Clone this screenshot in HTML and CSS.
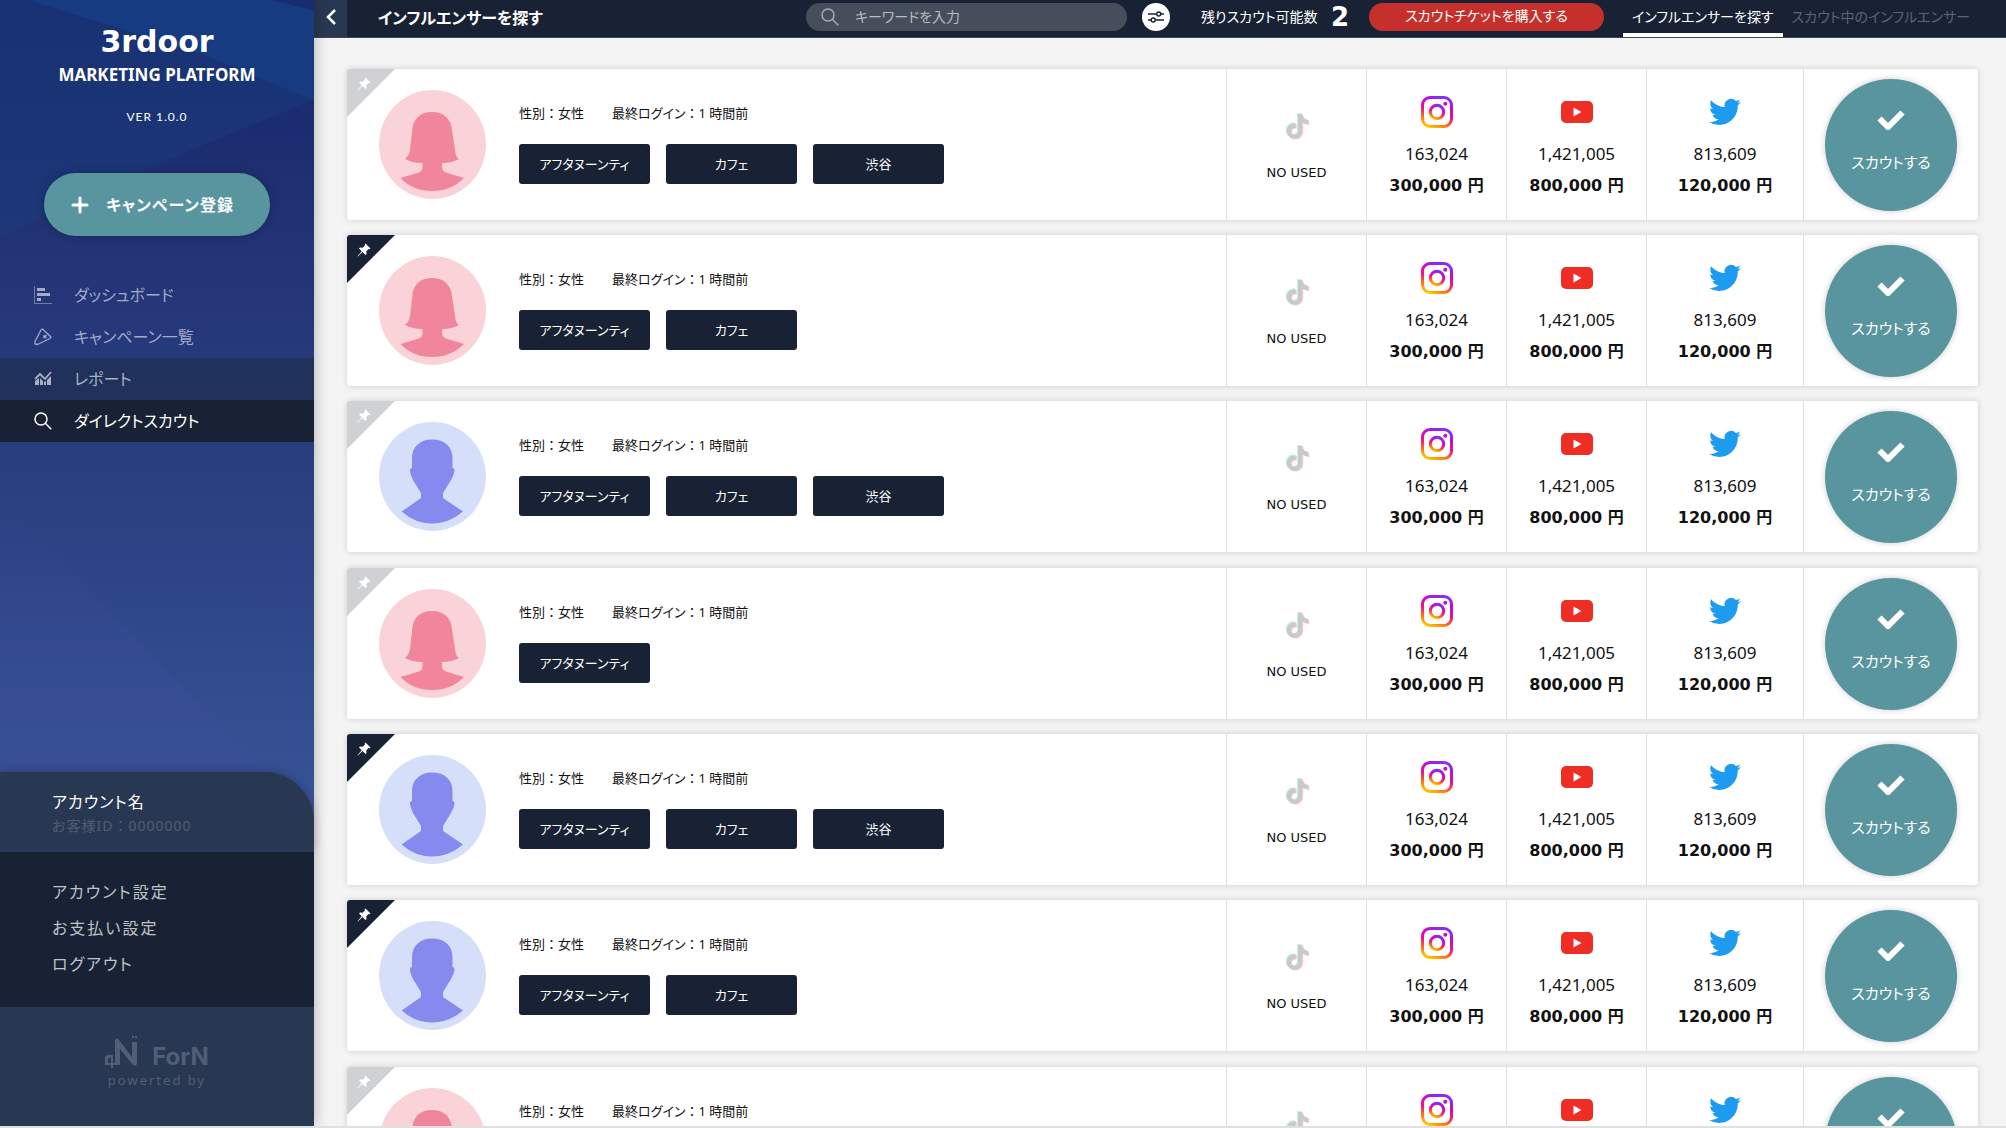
FILE: index.html
```html
<!DOCTYPE html>
<html lang="ja">
<head>
<meta charset="utf-8">
<meta name="viewport" content="width=device-width, initial-scale=1">
<title>3rdoor MARKETING PLATFORM</title>
<link rel="stylesheet" href="styles.css">
</head>
<body>
<svg class="sprite" aria-hidden="true">
  <defs>
    <linearGradient id="ig" x1="0.2" y1="1" x2="0.6" y2="0">
      <stop offset="0" stop-color="#ffc400"/><stop offset="0.25" stop-color="#ff6a1a"/><stop offset="0.5" stop-color="#f0128a"/><stop offset="0.8" stop-color="#c508d8"/><stop offset="1" stop-color="#8a2cf5"/>
    </linearGradient>
    <symbol id="i-instagram" viewBox="0 0 32 32"><g fill="none" stroke="url(#ig)" stroke-width="3"><rect x="1.500" y="1.500" width="29" height="29" rx="7.500"/><circle cx="16" cy="16" r="6.700"/></g><circle cx="24.300" cy="7.800" r="2" fill="#c010d0"/></symbol>
    <symbol id="i-youtube" viewBox="0 0 32 22"><rect width="32" height="22" rx="5" fill="#ee2d24"/><path d="M12.500 6.500v9l8-4.500z" fill="#fff"/></symbol>
    <symbol id="i-twitter" viewBox="0 0 24 24"><path fill="#1d9bf0" d="M23.953 4.570a10 10 0 01-2.825.775 4.958 4.958 0 002.163-2.723c-.951.555-2.005.959-3.127 1.184a4.920 4.920 0 00-8.384 4.482C7.690 8.095 4.067 6.130 1.640 3.162a4.822 4.822 0 00-.666 2.475c0 1.710.870 3.213 2.188 4.096a4.904 4.904 0 01-2.228-.616v.060a4.923 4.923 0 003.946 4.827 4.996 4.996 0 01-2.212.085 4.936 4.936 0 004.604 3.417 9.867 9.867 0 01-6.102 2.105c-.390 0-.779-.023-1.170-.067a13.995 13.995 0 007.557 2.209c9.053 0 13.998-7.496 13.998-13.985 0-.210 0-.420-.015-.630A9.935 9.935 0 0024 4.590z"/></symbol>
    <path id="note" d="M12.525.02c1.31-.02 2.61-.01 3.91-.02.08 1.53.63 3.09 1.75 4.17 1.12 1.11 2.7 1.62 4.24 1.79v4.03c-1.44-.05-2.89-.35-4.2-.97-.57-.26-1.1-.59-1.62-.93-.01 2.92.01 5.84-.02 8.75-.08 1.4-.54 2.79-1.35 3.94-1.31 1.92-3.58 3.17-5.91 3.21-1.43.08-2.86-.31-4.08-1.03-2.02-1.19-3.44-3.37-3.65-5.71-.02-.5-.03-1-.01-1.49.18-1.9 1.12-3.72 2.58-4.96 1.66-1.44 3.98-2.13 6.15-1.72.02 1.48-.04 2.96-.04 4.44-.99-.32-2.15-.23-3.02.37-.63.41-1.11 1.04-1.36 1.75-.21.51-.15 1.07-.14 1.61.24 1.64 1.82 3.02 3.5 2.87 1.12-.01 2.19-.66 2.77-1.61.19-.33.4-.67.41-1.06.1-1.79.06-3.57.07-5.36.01-4.03-.01-8.05.02-12.07z"/>
    <symbol id="i-tiktok" viewBox="0 -1 25 27"><use href="#note" x="0" y="0" fill="#c3f1f0"/><use href="#note" x="2" y="1.500" fill="#fcccd6"/><use href="#note" x="1" y="0.800" fill="#c9c9c9"/></symbol>
    <symbol id="i-pin" viewBox="0 0 14 14"><path fill="#fff" d="M8.500.5 13.500 5.500 12.500 6.300 11.500 6 9.300 8.300 9.500 11 8.500 12 5.500 9 .8 13.500.5 13.200 4.700 8.200 2 5.500 3 4.500 5.700 4.700 8 2.500 7.700 1.300z"/></symbol>
    <symbol id="i-check" viewBox="0 0 28 20"><path d="M2.500 8.500 11 17 25.500 2.500" fill="none" stroke="#fff" stroke-width="6"/></symbol>
    <symbol id="i-search" viewBox="0 0 18 18"><g fill="none" stroke="currentColor" stroke-width="1.500"><circle cx="7" cy="7" r="6"/><path d="M11.300 11.300 17.300 17.300"/></g></symbol>
    <symbol id="a-female" viewBox="0 0 107 109"><ellipse cx="53.500" cy="54.500" rx="53.500" ry="54.500" fill="#f9d3d8"/><path fill="#f0859b" d="M53 22C41 22 34 29 33.300 40L31 60Q30 66 26 69Q33 73 43.500 73V77Q43.500 81 40 82.500L21.500 88Q34 101 53 101T85 88L67 82.500Q63 81 63 77V73Q73 73 80 69Q76.500 67 76 60L73 40C72 29 65 22 53 22z"/></symbol>
    <symbol id="a-male" viewBox="0 0 107 109"><ellipse cx="53.500" cy="54.500" rx="53.500" ry="54.500" fill="#d5dff9"/><path fill="#8689ee" d="M53 17.500C41 17.500 33 25 33 36V46Q31 46 31 49Q31.500 53 34 58L42 71V76L22.700 89.500Q36 101.500 53 101.500T84 89.500L64 76V71L72 58Q75 53 75.500 49Q75.500 46 73.500 46V36C73.500 25 66 17.500 53 17.500z"/></symbol>
  </defs>
</svg>

<div class="app">
  <aside class="sidebar">
    <svg class="sidebar-art" viewBox="0 0 314 772" preserveAspectRatio="none" aria-hidden="true">
      <defs>
        <linearGradient id="sky" x1="0" y1="0" x2="0" y2="1"><stop offset="0" stop-color="#19306f"/><stop offset="0.15" stop-color="#1c2c70"/><stop offset="0.32" stop-color="#243577"/><stop offset="0.6" stop-color="#2a4182"/><stop offset="1" stop-color="#3a5699"/></linearGradient>
        <linearGradient id="ray" x1="0" y1="0" x2="0" y2="1"><stop offset="0" stop-color="#183173"/><stop offset="1" stop-color="#1d3778"/></linearGradient>
        <linearGradient id="haze" x1="0" y1="0" x2="0" y2="1"><stop offset="0" stop-color="#3b4da0" stop-opacity="0"/><stop offset="1" stop-color="#3b4f9a" stop-opacity="0.600"/></linearGradient>
      </defs>
      <rect width="314" height="772" fill="url(#sky)"/>
      <path d="M0 0H314V90L100 170 0 215z" fill="url(#ray)"/>
      <path d="M28 0H272L314 9V91L205 50z" fill="#173b80"/>
      <path d="M272 0H314V9z" fill="#1a2b70"/>
      <path d="M0 450 314 745V772H0z" fill="url(#haze)"/>
    </svg>
    <div class="brand">
      <h1 class="brand-name">3rdoor</h1>
      <p class="brand-sub">MARKETING PLATFORM</p>
      <p class="brand-ver">VER 1.0.0</p>
    </div>
    <button class="campaign-btn" type="button">
      <svg width="18" height="18" viewBox="0 0 18 18" aria-hidden="true"><path d="M9 2V16M2 9H16" stroke="#fff" stroke-width="3" stroke-linecap="round"/></svg>
      <span>キャンペーン登録</span>
    </button>
    <nav class="menu">
      <a href="#"><svg width="18" height="18" viewBox="0 0 18 18" aria-hidden="true"><path d="M.500 0V17.500H18" fill="none" stroke="currentColor" opacity=".6"/><path d="M3 2h8v3H3zM3 7h13v3H3zM3 12h4v3H3z" fill="currentColor"/></svg>ダッシュボード</a>
      <a href="#"><svg width="18" height="18" viewBox="0 0 18 18" aria-hidden="true"><g fill="none" stroke="currentColor" stroke-width="1.300" stroke-linejoin="round"><path d="M8.500 1 17 9 16 10.500 3.500 16.500 1 16 1 13.500 7 2z"/><path d="M10 9.500 12.500 7 M10 7V9.500H12.500"/></g></svg>キャンペーン一覧</a>
      <a href="#" class="hover"><svg width="18" height="18" viewBox="0 0 18 18" aria-hidden="true"><path d="M1 9 6 4 11 9 17 2" fill="none" stroke="currentColor" stroke-width="1.800"/><path d="M1 11 5 8V15H1zM6 8 9 11V15H6zM10 12 12 11V15H10zM13 10 17 6V15H13z" fill="currentColor"/></svg>レポート</a>
      <a href="#" class="active" aria-current="page"><svg width="18" height="18" aria-hidden="true"><use href="#i-search"/></svg>ダイレクトスカウト</a>
    </nav>
    <section class="account">
      <p class="account-name">アカウント名</p>
      <p class="account-id">お客様ID<span class="colon">：</span>0000000</p>
    </section>
    <nav class="account-menu">
      <a href="#">アカウント設定</a>
      <a href="#">お支払い設定</a>
      <a href="#">ログアウト</a>
    </nav>
    <footer class="powered">
      <div class="logo">
        <svg width="33" height="33" viewBox="0 0 33 33" aria-hidden="true"><path fill="currentColor" d="M10 4Q12 1 14 4L27 21V6H32V28Q31 31 28 29L15 13V29H8V32H6V29H0V22Q1 18 8 19V27H10zM3 27H6V22Q3 21 3 23zM27 0H29V2H27zM30 0H32V2H30z"/></svg>
        <span>ForN</span>
      </div>
      <p>powerted by</p>
    </footer>
  </aside>

  <div class="content">
    <header class="topbar">
      <button class="back" type="button" aria-label="戻る"><svg width="12" height="18" viewBox="0 0 12 18" aria-hidden="true"><path d="M10 2 3 9 10 16" fill="none" stroke="#fff" stroke-width="2.500"/></svg></button>
      <h2 class="title">インフルエンサーを探す</h2>
      <label class="search">
        <svg width="18" height="18" aria-hidden="true"><use href="#i-search"/></svg>
        <input type="search" placeholder="キーワードを入力" aria-label="キーワードを入力">
      </label>
      <button class="filter" type="button" aria-label="絞り込み"><svg width="16" height="12" viewBox="0 0 16 12" aria-hidden="true"><g fill="none" stroke="#182234" stroke-width="1.400"><path d="M0 3H8.500M13 3H16M0 9H3M7.500 9H16"/><circle cx="10.700" cy="3" r="2"/><circle cx="5.200" cy="9" r="2"/></g></svg></button>
      <p class="remain"><span>残りスカウト可能数</span><strong>2</strong></p>
      <button class="buy" type="button">スカウトチケットを購入する</button>
      <nav class="tabs">
        <a href="#" class="current" aria-current="page">インフルエンサーを探す</a>
        <a href="#">スカウト中のインフルエンサー</a>
      </nav>
    </header>

    <main class="list">
      <article class="card">
        <button class="pin" type="button" aria-label="ピン留め"><svg width="14" height="14"><use href="#i-pin"/></svg></button>
        <div class="profile">
          <svg class="avatar" role="img" aria-label="女性"><use href="#a-female"/></svg>
          <div class="detail">
            <p class="info"><span>性別<span class="colon">：</span>女性</span><span>最終ログイン<span class="colon">：</span>1 時間前</span></p>
            <div class="tags"><button type="button">アフタヌーンティ</button><button type="button">カフェ</button><button type="button">渋谷</button></div>
          </div>
        </div>
        <div class="sns unused"><svg class="icon"><use href="#i-tiktok"/></svg><p>NO USED</p></div>
        <div class="sns"><svg class="icon"><use href="#i-instagram"/></svg><p>163,024</p><strong>300,000 円</strong></div>
        <div class="sns"><svg class="icon"><use href="#i-youtube"/></svg><p>1,421,005</p><strong>800,000 円</strong></div>
        <div class="sns wide"><svg class="icon"><use href="#i-twitter"/></svg><p>813,609</p><strong>120,000 円</strong></div>
        <div class="action"><button class="scout" type="button"><svg width="28" height="20"><use href="#i-check"/></svg>スカウトする</button></div>
      </article>

      <article class="card">
        <button class="pin pinned" type="button" aria-label="ピン留め"><svg width="14" height="14"><use href="#i-pin"/></svg></button>
        <div class="profile">
          <svg class="avatar" role="img" aria-label="女性"><use href="#a-female"/></svg>
          <div class="detail">
            <p class="info"><span>性別<span class="colon">：</span>女性</span><span>最終ログイン<span class="colon">：</span>1 時間前</span></p>
            <div class="tags"><button type="button">アフタヌーンティ</button><button type="button">カフェ</button></div>
          </div>
        </div>
        <div class="sns unused"><svg class="icon"><use href="#i-tiktok"/></svg><p>NO USED</p></div>
        <div class="sns"><svg class="icon"><use href="#i-instagram"/></svg><p>163,024</p><strong>300,000 円</strong></div>
        <div class="sns"><svg class="icon"><use href="#i-youtube"/></svg><p>1,421,005</p><strong>800,000 円</strong></div>
        <div class="sns wide"><svg class="icon"><use href="#i-twitter"/></svg><p>813,609</p><strong>120,000 円</strong></div>
        <div class="action"><button class="scout" type="button"><svg width="28" height="20"><use href="#i-check"/></svg>スカウトする</button></div>
      </article>

      <article class="card">
        <button class="pin" type="button" aria-label="ピン留め"><svg width="14" height="14"><use href="#i-pin"/></svg></button>
        <div class="profile">
          <svg class="avatar" role="img" aria-label="男性"><use href="#a-male"/></svg>
          <div class="detail">
            <p class="info"><span>性別<span class="colon">：</span>女性</span><span>最終ログイン<span class="colon">：</span>1 時間前</span></p>
            <div class="tags"><button type="button">アフタヌーンティ</button><button type="button">カフェ</button><button type="button">渋谷</button></div>
          </div>
        </div>
        <div class="sns unused"><svg class="icon"><use href="#i-tiktok"/></svg><p>NO USED</p></div>
        <div class="sns"><svg class="icon"><use href="#i-instagram"/></svg><p>163,024</p><strong>300,000 円</strong></div>
        <div class="sns"><svg class="icon"><use href="#i-youtube"/></svg><p>1,421,005</p><strong>800,000 円</strong></div>
        <div class="sns wide"><svg class="icon"><use href="#i-twitter"/></svg><p>813,609</p><strong>120,000 円</strong></div>
        <div class="action"><button class="scout" type="button"><svg width="28" height="20"><use href="#i-check"/></svg>スカウトする</button></div>
      </article>

      <article class="card">
        <button class="pin" type="button" aria-label="ピン留め"><svg width="14" height="14"><use href="#i-pin"/></svg></button>
        <div class="profile">
          <svg class="avatar" role="img" aria-label="女性"><use href="#a-female"/></svg>
          <div class="detail">
            <p class="info"><span>性別<span class="colon">：</span>女性</span><span>最終ログイン<span class="colon">：</span>1 時間前</span></p>
            <div class="tags"><button type="button">アフタヌーンティ</button></div>
          </div>
        </div>
        <div class="sns unused"><svg class="icon"><use href="#i-tiktok"/></svg><p>NO USED</p></div>
        <div class="sns"><svg class="icon"><use href="#i-instagram"/></svg><p>163,024</p><strong>300,000 円</strong></div>
        <div class="sns"><svg class="icon"><use href="#i-youtube"/></svg><p>1,421,005</p><strong>800,000 円</strong></div>
        <div class="sns wide"><svg class="icon"><use href="#i-twitter"/></svg><p>813,609</p><strong>120,000 円</strong></div>
        <div class="action"><button class="scout" type="button"><svg width="28" height="20"><use href="#i-check"/></svg>スカウトする</button></div>
      </article>

      <article class="card">
        <button class="pin pinned" type="button" aria-label="ピン留め"><svg width="14" height="14"><use href="#i-pin"/></svg></button>
        <div class="profile">
          <svg class="avatar" role="img" aria-label="男性"><use href="#a-male"/></svg>
          <div class="detail">
            <p class="info"><span>性別<span class="colon">：</span>女性</span><span>最終ログイン<span class="colon">：</span>1 時間前</span></p>
            <div class="tags"><button type="button">アフタヌーンティ</button><button type="button">カフェ</button><button type="button">渋谷</button></div>
          </div>
        </div>
        <div class="sns unused"><svg class="icon"><use href="#i-tiktok"/></svg><p>NO USED</p></div>
        <div class="sns"><svg class="icon"><use href="#i-instagram"/></svg><p>163,024</p><strong>300,000 円</strong></div>
        <div class="sns"><svg class="icon"><use href="#i-youtube"/></svg><p>1,421,005</p><strong>800,000 円</strong></div>
        <div class="sns wide"><svg class="icon"><use href="#i-twitter"/></svg><p>813,609</p><strong>120,000 円</strong></div>
        <div class="action"><button class="scout" type="button"><svg width="28" height="20"><use href="#i-check"/></svg>スカウトする</button></div>
      </article>

      <article class="card">
        <button class="pin pinned" type="button" aria-label="ピン留め"><svg width="14" height="14"><use href="#i-pin"/></svg></button>
        <div class="profile">
          <svg class="avatar" role="img" aria-label="男性"><use href="#a-male"/></svg>
          <div class="detail">
            <p class="info"><span>性別<span class="colon">：</span>女性</span><span>最終ログイン<span class="colon">：</span>1 時間前</span></p>
            <div class="tags"><button type="button">アフタヌーンティ</button><button type="button">カフェ</button></div>
          </div>
        </div>
        <div class="sns unused"><svg class="icon"><use href="#i-tiktok"/></svg><p>NO USED</p></div>
        <div class="sns"><svg class="icon"><use href="#i-instagram"/></svg><p>163,024</p><strong>300,000 円</strong></div>
        <div class="sns"><svg class="icon"><use href="#i-youtube"/></svg><p>1,421,005</p><strong>800,000 円</strong></div>
        <div class="sns wide"><svg class="icon"><use href="#i-twitter"/></svg><p>813,609</p><strong>120,000 円</strong></div>
        <div class="action"><button class="scout" type="button"><svg width="28" height="20"><use href="#i-check"/></svg>スカウトする</button></div>
      </article>

      <article class="card">
        <button class="pin" type="button" aria-label="ピン留め"><svg width="14" height="14"><use href="#i-pin"/></svg></button>
        <div class="profile">
          <svg class="avatar" role="img" aria-label="女性"><use href="#a-female"/></svg>
          <div class="detail">
            <p class="info"><span>性別<span class="colon">：</span>女性</span><span>最終ログイン<span class="colon">：</span>1 時間前</span></p>
            <div class="tags"><button type="button">アフタヌーンティ</button></div>
          </div>
        </div>
        <div class="sns unused"><svg class="icon"><use href="#i-tiktok"/></svg><p>NO USED</p></div>
        <div class="sns"><svg class="icon"><use href="#i-instagram"/></svg><p>163,024</p><strong>300,000 円</strong></div>
        <div class="sns"><svg class="icon"><use href="#i-youtube"/></svg><p>1,421,005</p><strong>800,000 円</strong></div>
        <div class="sns wide"><svg class="icon"><use href="#i-twitter"/></svg><p>813,609</p><strong>120,000 円</strong></div>
        <div class="action"><button class="scout" type="button"><svg width="28" height="20"><use href="#i-check"/></svg>スカウトする</button></div>
      </article>
    </main>
  </div>
</div>
</body>
</html>
```
FILE: styles.css
```css
* { box-sizing: border-box; }

body {
  margin: 0;
  background: #e0e0e0;
  color: #111;
  font-family: "Noto Sans", "Noto Sans CJK JP", sans-serif;
  font-size: 13px;
  line-height: 20px;
  font-feature-settings: "palt";
}

h1, h2, p { margin: 0; }
a { color: inherit; text-decoration: none; }
button {
  border: 0;
  padding: 0;
  font: inherit;
  font-feature-settings: inherit;
  color: #fff;
  cursor: pointer;
}
svg { display: block; flex: none; }
.sprite { position: absolute; width: 0; height: 0; }
.colon { font-feature-settings: normal; }

.app {
  display: flex;
  height: calc(100vh - 2px);
  background: #f4f4f4;
}

/* sidebar */
.sidebar {
  position: relative;
  z-index: 1;
  display: flex;
  flex-direction: column;
  flex: none;
  width: 314px;
  background: #3a5699;
  color: #fff;
  box-shadow: 0 0 14px rgba(0, 0, 0, .3);
}
.sidebar-art {
  position: absolute;
  inset: 0;
  z-index: -1;
  width: 100%;
  height: calc(100% - 274px);
}
.brand { padding-top: 22px; text-align: center; }
.brand-name {
  font: bold 30px/40px "DejaVu Sans", sans-serif;
}
.brand-sub {
  padding-top: 1px;
  font-size: 17px;
  font-weight: bold;
  line-height: 24px;
}
.brand-ver {
  padding-top: 20px;
  font-family: Lato, sans-serif;
  font-size: 12px;
  letter-spacing: 1px;
}
.campaign-btn {
  display: flex;
  align-items: center;
  gap: 17px;
  height: 63px;
  margin: 46px 44px 0;
  padding-left: 27px;
  border-radius: 32px;
  background: #59959e;
  box-shadow: 0 0 8px rgba(0, 0, 0, .25);
  font-size: 16px;
  font-weight: bold;
  letter-spacing: 1px;
}
.menu { margin-top: 38px; font-size: 16px; }
.menu a {
  display: flex;
  align-items: center;
  gap: 22px;
  height: 42px;
  padding-left: 34px;
  color: #a4abc6;
}
.menu .hover { background: #20315b; color: #a9b0bf; }
.menu .active { background: #182234; color: #fff; }

.account {
  height: 80px;
  margin-top: auto;
  padding: 18px 52px 0;
  border-radius: 0 50px 0 0;
  background: #293852;
  box-shadow: 0 -2px 8px rgba(0, 0, 0, .2);
  letter-spacing: 1px;
}
.account-name { font-size: 16px; line-height: 24px; }
.account-id { padding-top: 2px; color: #515d72; font-size: 14px; }
.account-menu {
  display: flex;
  flex-direction: column;
  gap: 12px;
  height: 155px;
  padding: 28px 52px 0;
  background: #182234;
  color: #c0c3c9;
  font-size: 16px;
  line-height: 24px;
  letter-spacing: 2px;
}
.powered {
  height: 119px;
  padding-top: 29px;
  background: #293852;
  color: #515e76;
  text-align: center;
}
.logo { display: flex; justify-content: center; gap: 14px; }
.logo span { padding-top: 9px; font: bold 24px/24px Inter, sans-serif; }
.powered p { padding-top: 1px; letter-spacing: 2px; }

/* top bar */
.content {
  display: flex;
  flex: 1;
  flex-direction: column;
  min-width: 0;
}
.topbar {
  display: flex;
  flex: none;
  align-items: center;
  height: 38px;
  padding-right: 27px;
  border-bottom: 1px solid #3b4456;
  background: #182234;
  color: #fff;
}
.back {
  display: grid;
  place-items: center;
  align-self: stretch;
  width: 33px;
  padding-bottom: 4px;
  background: #293852;
}
.title { margin: 0 auto 2px 31px; font-size: 16px; line-height: 24px; }
.search {
  display: flex;
  align-items: center;
  gap: 16px;
  width: 321px;
  height: 28px;
  margin: 0 15px 3px 0;
  padding: 0 15px;
  border-radius: 14px;
  background: #464e5c;
  color: #a6aab0;
}
.search input {
  flex: 1;
  min-width: 0;
  padding: 0;
  border: 0;
  outline: 0;
  background: none;
  color: #fff;
  font: inherit;
  font-size: 14px;
  font-feature-settings: inherit;
}
.search input::placeholder { color: #b9bcc2; }
.filter {
  display: grid;
  place-items: center;
  width: 28px;
  height: 28px;
  margin: 0 31px 3px 0;
  border-radius: 50%;
  background: #fff;
}
.remain {
  display: flex;
  align-items: center;
  justify-content: space-between;
  width: 148px;
  margin: 0 20px 3px 0;
  font-size: 14px;
  white-space: nowrap;
}
.remain strong { font: bold 26px/28px "DejaVu Sans", sans-serif; }
.buy {
  width: 235px;
  height: 28px;
  margin: 0 19px 3px 0;
  padding-bottom: 3px;
  border-radius: 14px;
  background: #c6302c;
  font-size: 14px;
}
.tabs { display: flex; align-self: stretch; font-size: 14px; white-space: nowrap; }
.tabs a {
  padding: 7px 9px 0;
  border-bottom: 4px solid transparent;
  color: #5d6573;
}
.tabs .current { border-color: #fff; color: #fff; }

/* influencer list */
.list {
  display: flex;
  flex: 1;
  flex-direction: column;
  gap: 15px;
  min-height: 0;
  padding: 31px 28px 31px 33px;
  overflow-y: auto;
  scrollbar-width: none;
}
.card {
  position: relative;
  display: flex;
  flex: none;
  height: 151px;
  border-radius: 3px;
  background: #fff;
  box-shadow: 0 0 6px rgba(0, 0, 0, .16);
}
.card:nth-child(3n) { margin-bottom: 1px; }
.pin {
  position: absolute;
  top: 0;
  left: 0;
  width: 48px;
  height: 48px;
  padding: 8px 0 0 10px;
  border-radius: 3px 0 0 0;
  background: #d0d1d5;
  clip-path: polygon(0 0, 100% 0, 0 100%);
}
.pin svg { margin-bottom: 26px; }
.pinned { background: #182234; }
.profile {
  display: flex;
  flex: 1;
  align-items: center;
  gap: 33px;
  min-width: 0;
  padding-left: 32px;
}
.avatar { width: 107px; height: 109px; }
.detail { padding-bottom: 3px; }
.info { display: flex; gap: 28px; white-space: nowrap; }
.tags { display: flex; gap: 16px; padding-top: 21px; }
.tags button {
  width: 131px;
  height: 40px;
  border-radius: 3px;
  background: #182234;
}
.sns {
  display: flex;
  flex-direction: column;
  align-items: center;
  justify-content: center;
  width: 140px;
  padding-top: 4px;
  border-left: 1px solid #dedfe0;
  line-height: 24px;
  white-space: nowrap;
}
.wide { width: 157px; }
.icon { width: 32px; height: 32px; }
.sns p { padding: 14px 0 8px; font-size: 17px; }
.sns strong { font-family: "DejaVu Sans", "Noto Sans CJK JP", sans-serif; font-size: 16px; }
.unused p { padding: 21px 0 0; font: 13px/20px "DejaVu Sans", sans-serif; }
.unused .icon { height: 28px; margin: 2px 0; }
.action {
  display: grid;
  place-items: center;
  width: 175px;
  border-left: 1px solid #dedfe0;
}
.scout {
  display: flex;
  flex-direction: column;
  align-items: center;
  justify-content: center;
  gap: 22px;
  width: 132px;
  height: 132px;
  padding-bottom: 8px;
  border-radius: 50%;
  background: #59959e;
  box-shadow: 0 0 6px rgba(0, 0, 0, .2);
  font-size: 15px;
}
```
